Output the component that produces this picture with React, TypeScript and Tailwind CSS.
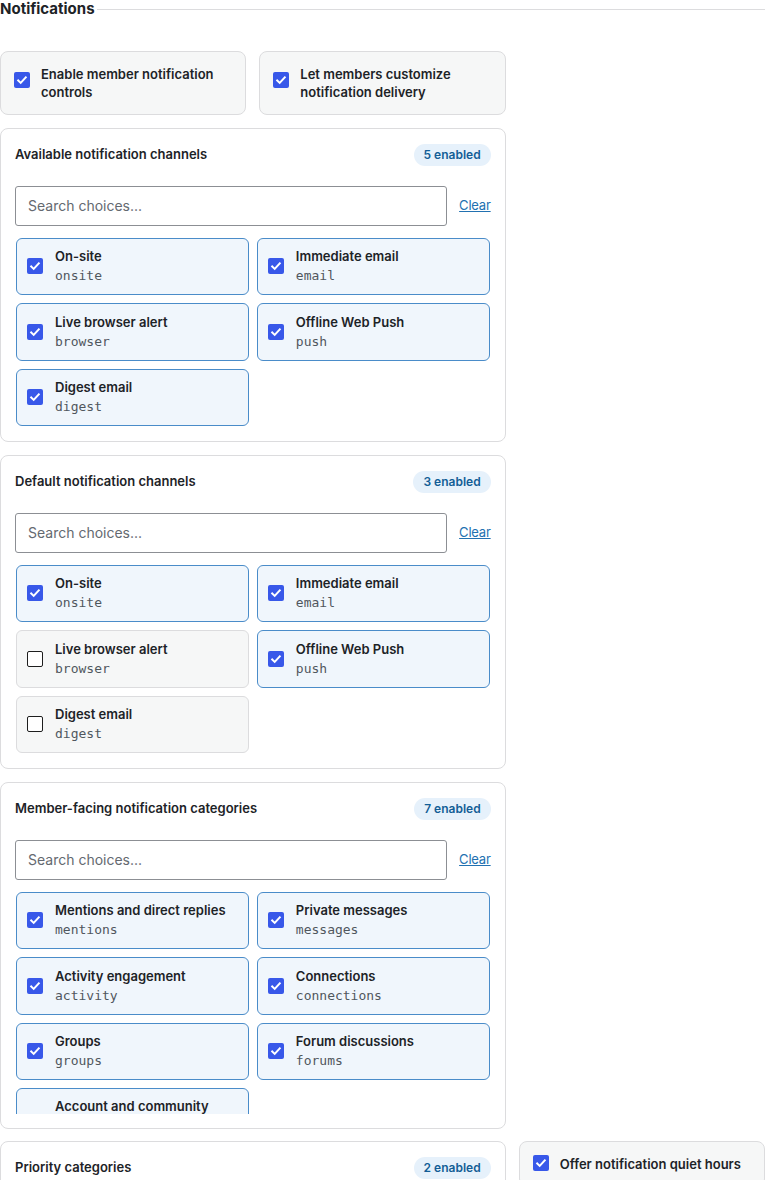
import React, { useState } from "react";

type Choice = { label: string; value: string; checked: boolean };

const SANS = "font-['Inter','Noto_Sans',sans-serif]";

function Box({ checked }: { checked: boolean }) {
  if (checked) {
    return (
      <span className="flex h-4 w-4 shrink-0 items-center justify-center rounded-[2px] bg-[#3858e9]">
        <svg viewBox="0 0 16 16" className="h-4 w-4" aria-hidden="true">
          <path d="M4.2 8.4l2.5 2.5 5.1-5.6" fill="none" stroke="#fff" strokeWidth="2" strokeLinecap="square" />
        </svg>
      </span>
    );
  }
  return <span className="h-4 w-4 shrink-0 rounded-[2px] border-[1.5px] border-[#1e1e1e] bg-white" />;
}

function ToggleCard({ label, className = "", boxOffset = "mt-[7px]" }: { label: string; className?: string; boxOffset?: string }) {
  return (
    <label
      className={`flex items-start gap-[11px] rounded-lg border border-[#dcdcde] bg-[#f6f7f7] px-[13px] py-[13px] ${className}`}
    >
      <span className={boxOffset}>
        <Box checked />
      </span>
      <span className="text-[13px] font-semibold leading-[18px] text-[#1d2327]">{label}</span>
    </label>
  );
}

function ChoiceItem({ choice }: { choice: Choice }) {
  return (
    <label
      className={`flex min-h-[57.5px] items-center gap-3 rounded-md border px-[10px] py-[8px] ${
        choice.checked ? "border-[#4a8cc9] bg-[#f0f6fc]" : "border-[#dcdcde] bg-[#f6f7f7]"
      }`}
    >
      <Box checked={choice.checked} />
      <span className="flex min-w-0 flex-col">
        <span className="text-[13px] font-semibold leading-[18px] text-[#1d2327]">{choice.label}</span>
        <span className="mt-[2px] break-all font-['DejaVu_Sans_Mono',monospace] text-[13px] leading-[18px] text-[#50575e]">
          {choice.value}
        </span>
      </span>
    </label>
  );
}

function ChoicePanel({ title, choices, tall }: { title: string; choices: Choice[]; tall?: boolean }) {
  const [query, setQuery] = useState("");
  const enabled = choices.filter((c) => c.checked).length;
  return (
    <section className="col-span-2 rounded-lg border border-[#dcdcde] bg-white p-[14px]">
      <div className="flex h-6 items-center justify-between">
        <h3 className="text-[13px] font-semibold text-[#1d2327]">{title}</h3>
        <span className="rounded-full bg-[#e6f1fb] px-[10px] py-[3px] text-[12px] font-semibold leading-4 text-[#135e96]">
          {enabled} enabled
        </span>
      </div>
      <div className="mt-[19px] flex items-center gap-3">
        <input
          value={query}
          onChange={(e) => setQuery(e.target.value)}
          placeholder="Search choices..."
          className="h-10 min-w-0 flex-1 rounded-[3px] border border-[#8c8f94] bg-white px-3 text-[14px] text-[#1d2327] placeholder:text-[#646970] outline-none"
        />
        <button type="button" onClick={() => setQuery("")} className="text-[13px] tracking-[-0.2px] text-[#2271b1] underline">
          Clear
        </button>
      </div>
      <div className={`mt-[11px] grid grid-cols-2 items-start gap-2 p-px ${tall ? "max-h-[223px] overflow-hidden" : ""}`}>
        {choices.map((c) => (
          <ChoiceItem key={c.value} choice={c} />
        ))}
      </div>
    </section>
  );
}

const channels = (on: string[]): Choice[] =>
  [
    { label: "On-site", value: "onsite" },
    { label: "Immediate email", value: "email" },
    { label: "Live browser alert", value: "browser" },
    { label: "Offline Web Push", value: "push" },
    { label: "Digest email", value: "digest" },
  ].map((c) => ({ ...c, checked: on.includes(c.value) }));

const categories = (on: string[]): Choice[] =>
  [
    { label: "Mentions and direct replies", value: "mentions" },
    { label: "Private messages", value: "messages" },
    { label: "Activity engagement", value: "activity" },
    { label: "Connections", value: "connections" },
    { label: "Groups", value: "groups" },
    { label: "Forum discussions", value: "forums" },
    { label: "Account and community", value: "account_and_community_updates" },
  ].map((c) => ({ ...c, checked: on.includes(c.value) }));

export default function App() {
  return (
    <div className={`${SANS} min-h-screen bg-white text-[#1d2327]`}>
      <div className="flex h-[18px] items-center gap-[2px]">
        <h2 className="text-[15px] font-bold leading-[18px] text-[#1d2327]">Notifications</h2>
        <div className="h-px flex-1 bg-[#dcdcde]" />
      </div>

      <div className="mt-[33px] grid grid-cols-3 gap-x-[13px] gap-y-[12.5px]">
        <ToggleCard label="Enable member notification controls" />
        <ToggleCard label="Let members customize notification delivery" />
        <div />

        <ChoicePanel
          title="Available notification channels"
          choices={channels(["onsite", "email", "browser", "push", "digest"])}
        />
        <div />

        <ChoicePanel title="Default notification channels" choices={channels(["onsite", "email", "push"])} />
        <div />

        <ChoicePanel
          title="Member-facing notification categories"
          choices={categories([
            "mentions",
            "messages",
            "activity",
            "connections",
            "groups",
            "forums",
            "account_and_community_updates",
          ])}
          tall
        />
        <div />

        <ChoicePanel title="Priority categories" choices={categories(["mentions", "messages"])} tall />
        <ToggleCard label="Offer notification quiet hours" className="self-start" boxOffset="mt-[0px]" />
      </div>
    </div>
  );
}
